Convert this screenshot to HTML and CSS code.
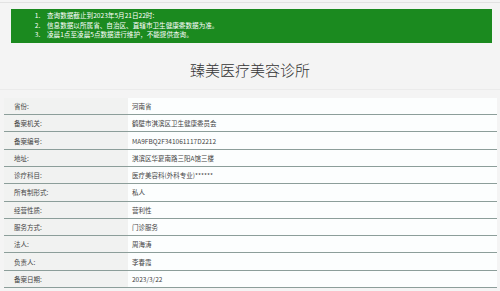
FILE: index.html
```html
<!DOCTYPE html>
<html lang="zh-CN">
<head>
    <meta charset="UTF-8">
    <meta name="viewport" content="width=device-width, initial-scale=1.0">
    <title>臻美医疗美容诊所</title>
    <link rel="stylesheet" href="styles.css">
</head>
<body>
    <div class="page">
        <div class="notice">
            <div class="notice-line"><span class="num">1.</span>查询数据截止到2023年5月21日22时:</div>
            <div class="notice-line"><span class="num">2.</span>信息数据以所属省、自治区、直辖市卫生健康委数据为准。</div>
            <div class="notice-line"><span class="num">3.</span>凌晨1点至凌晨5点数据进行维护，不能提供查询。</div>
        </div>
        <h1 class="title">臻美医疗美容诊所</h1>
        <div class="info">
            <div class="row"><div class="label">省份:</div><div class="value">河南省</div></div>
            <div class="row"><div class="label">备案机关:</div><div class="value">鹤壁市淇滨区卫生健康委员会</div></div>
            <div class="row"><div class="label">备案编号:</div><div class="value">MA9FBQ2F341061117D2212</div></div>
            <div class="row"><div class="label">地址:</div><div class="value">淇滨区华夏南路三阳A馆三楼</div></div>
            <div class="row"><div class="label">诊疗科目:</div><div class="value">医疗美容科(外科专业)******</div></div>
            <div class="row"><div class="label">所有制形式:</div><div class="value">私人</div></div>
            <div class="row"><div class="label">经营性质:</div><div class="value">营利性</div></div>
            <div class="row"><div class="label">服务方式:</div><div class="value">门诊服务</div></div>
            <div class="row"><div class="label">法人:</div><div class="value">周海涛</div></div>
            <div class="row"><div class="label">负责人:</div><div class="value">李春霞</div></div>
            <div class="row"><div class="label">备案日期:</div><div class="value">2023/3/22</div></div>
        </div>
    </div>
</body>
</html>
```

FILE: styles.css
```css
body {
    margin: 0;
    background-color: #f4f4f4;
    font-family: "Noto Sans CJK SC", "Liberation Sans", sans-serif;
    color: #333;
}
.page {
    margin-top: 2px;
    border-top: 1px solid #e2e2e2;
    padding-top: 6px;
}
.notice {
    margin: 0 8px 0 11px;
    padding: 2px 0 3px 21px;
    background-color: #1b8a1f;
    color: #fff;
    font-size: 6.6px;
}
.notice-line {
    line-height: 9.6px;
    white-space: nowrap;
}
.notice-line .num {
    display: inline-block;
    width: 11px;
    text-align: center;
    margin-right: 4px;
}
.title {
    margin: 17px 0 0;
    padding-bottom: 9px;
    border-bottom: 1px solid #ebebeb;
    text-align: center;
    font-size: 15px;
    line-height: 20px;
    font-weight: 300;
    color: #333;
}
.info {
    margin: 8px 3px 0 4px;
}
.row {
    display: flex;
    height: 16.3px;
    border-bottom: 1px solid #8c9e9a;
    font-size: 6.5px;
    color: #444;
}
.label {
    width: 114px;
    padding-left: 10px;
    background-color: #f1f2f1;
    display: flex;
    align-items: center;
}
.value {
    flex: 1;
    padding-left: 4px;
    background-color: #fcfefe;
    display: flex;
    align-items: center;
}
```
